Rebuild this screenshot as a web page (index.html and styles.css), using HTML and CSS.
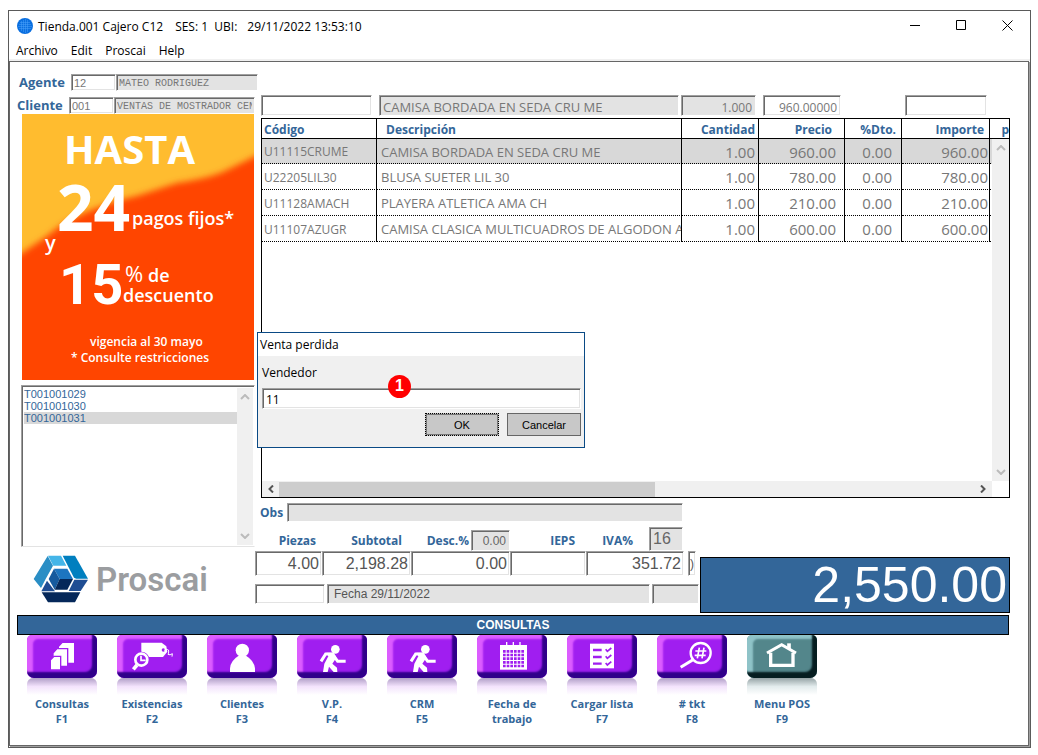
FILE: index.html
```
<!DOCTYPE html>
<html lang="es">
<head>
    <meta charset="UTF-8">
    <meta name="viewport" content="width=device-width, initial-scale=1.0">
    <title>Tienda.001 Cajero C12</title>
    <link rel="stylesheet" href="styles.css">
</head>
<body>
    <div class="window">
        <!-- Title bar -->
        <header class="title-bar">
            <svg class="globe" width="16" height="16" viewBox="0 0 16 16">
                <circle cx="8" cy="8" r="8" fill="#0a6fe0"></circle>
                <path d="M3 4.5h10M2 6.5h12M1 8.5h14M2 10.5h12M4.5 3v10M6.5 2v12M8.5 1v14M10.5 2v12" stroke="#4aa3fa" stroke-width="0.5"></path>
            </svg>
            <span class="title-store">Tienda.001 Cajero C12</span>
            <span class="title-session">SES: 1&nbsp; UBI:</span>
            <span>29/11/2022 13:53:10</span>
            <div class="window-buttons">
                <button aria-label="Minimizar"><svg width="11" height="11"><path d="M0 5.5h10" stroke="#000"></path></svg></button>
                <button aria-label="Maximizar"><svg width="11" height="11"><path d="M.5 .5h9v9h-9z" fill="none" stroke="#000"></path></svg></button>
                <button aria-label="Cerrar"><svg width="11" height="11"><path d="M.5 .5l10 10M10.5 .5l-10 10" stroke="#000"></path></svg></button>
            </div>
        </header>

        <nav class="menu-bar">
            <a href="#">Archivo</a>
            <a href="#">Edit</a>
            <a href="#">Proscai</a>
            <a href="#">Help</a>
        </nav>

        <main>
            <div class="person agent">
                <label for="agent-id">Agente</label>
                <input id="agent-id" class="field person-id" value="12">
                <input class="field off person-name" aria-label="Nombre del agente" value="MATEO RODRIGUEZ" readonly>
            </div>

            <div class="workspace">
                <aside class="sidebar">
                    <div class="person">
                        <label for="client-id">Cliente</label>
                        <input id="client-id" class="field person-id" value="001">
                        <input class="field off person-name" aria-label="Nombre del cliente" value="VENTAS DE MOSTRADOR CENTRO" readonly>
                    </div>

                    <!-- Promo banner -->
                    <svg class="promo" viewBox="0 0 232 266">
                        <defs>
                            <filter id="soft"><feGaussianBlur stdDeviation="3"></feGaussianBlur></filter>
                        </defs>
                        <rect width="232" height="266" fill="#ffbc2f"></rect>
                        <path d="M-20 151L0 139L21 125L38 112Q70 92 115 82L155 69Q190 64 205 56L250 34V290H-20z" fill="#ff4405" filter="url(#soft)"></path>
                        <g fill="#fff" font-weight="600">
                            <text x="42" y="50" font-size="40" font-weight="700">HASTA</text>
                            <text x="35" y="117" font-size="64" font-weight="700">24</text>
                            <text x="110" y="111" font-size="18">pagos fijos*</text>
                            <text x="23" y="136" font-size="20">y</text>
                            <text x="37" y="190" font-size="56" font-weight="700" class="rate">15</text>
                            <text x="103" y="168" font-size="22" font-weight="400">%</text>
                            <text x="126" y="168" font-size="18">de</text>
                            <text x="101" y="188" font-size="18">descuento</text>
                            <text x="68" y="232" font-size="12">vigencia al 30 mayo</text>
                            <text x="49" y="248" font-size="12">* Consulte restricciones</text>
                        </g>
                    </svg>

                    <div class="ticket-box">
                        <ul class="tickets">
                            <li>T001001029</li>
                            <li>T001001030</li>
                            <li class="selected">T001001031</li>
                        </ul>
                        <div class="scroll-v">
                            <svg width="10" height="6"><path d="M1 5l4-4 4 4"></path></svg>
                            <svg width="10" height="6"><path d="M1 1l4 4 4-4"></path></svg>
                        </div>
                    </div>

                    <div class="brand">
                        <svg width="56" height="48" viewBox="0 0 168 144">
                            <path d="M45 2H84L100 32H61z" fill="#44b5e8"></path>
                            <path d="M44 3L60 32L38 72L24 99L2 72z" fill="#2a8ec5"></path>
                            <path d="M89 2H126L165 71H130L123 68z" fill="#007fbf"></path>
                            <path d="M124 74H165L143 108H107z" fill="#1f4d93"></path>
                            <path d="M26 112H142L126 142H45z" fill="#05285a"></path>
                            <path d="M42 77L66 109H25z" fill="#1f4d93"></path>
                            <path d="M63 41H103L120 72H80z" fill="#1d75c0"></path>
                            <path d="M63 41L80 72L65 104L47 72z" fill="#165a9e"></path>
                            <path d="M80 72H120L103 104H65z" fill="#05285a"></path>
                        </svg>
                        <span>Proscai</span>
                    </div>
                </aside>

                <section class="sale">
                    <div class="entry">
                        <input class="field entry-code" aria-label="Código">
                        <input class="field off entry-text" aria-label="Descripción" value="CAMISA BORDADA EN SEDA CRU ME" readonly>
                        <input class="field off number" aria-label="Cantidad" value="1.000" readonly>
                        <input class="field number entry-price" aria-label="Precio" value="960.00000">
                        <input class="field number entry-amount" aria-label="Importe">
                    </div>

                    <div class="items">
                        <table>
                            <colgroup>
                                <col class="col-code">
                                <col>
                                <col class="col-qty">
                                <col class="col-price">
                                <col class="col-disc">
                                <col class="col-amount">
                                <col class="col-more">
                            </colgroup>
                            <thead>
                                <tr>
                                    <th>Código</th>
                                    <th>Descripción</th>
                                    <th>Cantidad</th>
                                    <th>Precio</th>
                                    <th>%Dto.</th>
                                    <th>Importe</th>
                                    <th>p</th>
                                </tr>
                            </thead>
                            <tbody>
                                <tr class="current">
                                    <td>U11115CRUME</td>
                                    <td>CAMISA BORDADA EN SEDA CRU ME</td>
                                    <td>1.00</td>
                                    <td>960.00</td>
                                    <td>0.00</td>
                                    <td>960.00</td>
                                    <td></td>
                                </tr>
                                <tr>
                                    <td>U22205LIL30</td>
                                    <td>BLUSA SUETER LIL 30</td>
                                    <td>1.00</td>
                                    <td>780.00</td>
                                    <td>0.00</td>
                                    <td>780.00</td>
                                    <td></td>
                                </tr>
                                <tr>
                                    <td>U11128AMACH</td>
                                    <td>PLAYERA ATLETICA AMA CH</td>
                                    <td>1.00</td>
                                    <td>210.00</td>
                                    <td>0.00</td>
                                    <td>210.00</td>
                                    <td></td>
                                </tr>
                                <tr>
                                    <td>U11107AZUGR</td>
                                    <td>CAMISA CLASICA MULTICUADROS DE ALGODON AZ</td>
                                    <td>1.00</td>
                                    <td>600.00</td>
                                    <td>0.00</td>
                                    <td>600.00</td>
                                    <td></td>
                                </tr>
                            </tbody>
                        </table>
                        <div class="scroll-v">
                            <svg width="10" height="6"><path d="M1 5l4-4 4 4"></path></svg>
                            <svg width="10" height="6"><path d="M1 1l4 4 4-4"></path></svg>
                        </div>
                        <div class="scroll-h">
                            <svg width="6" height="8"><path d="M5 0.5L1.5 4L5 7.5"></path></svg>
                            <div class="track"><div class="thumb"></div></div>
                            <svg width="6" height="8"><path d="M1 0.5L4.5 4L1 7.5"></path></svg>
                        </div>
                    </div>

                    <div class="notes">
                        <label for="notes">Obs</label>
                        <input id="notes" class="field off" readonly>
                    </div>

                    <div class="summary">
                        <div class="figures">
                            <div class="totals">
                                <label for="pieces" class="head-pieces">Piezas</label>
                                <label for="subtotal" class="head-subtotal">Subtotal</label>
                                <div class="head-field">
                                    <label for="discount">Desc.%</label>
                                    <input class="field off number disc-rate" aria-label="Porcentaje de descuento" value="0.00" readonly>
                                </div>
                                <label for="ieps" class="head-ieps">IEPS</label>
                                <div class="head-field head-tax">
                                    <label for="tax">IVA%</label>
                                    <input class="field off tax-rate" aria-label="Porcentaje de IVA" value="16" readonly>
                                </div>
                                <input id="pieces" class="field total" value="4.00">
                                <input id="subtotal" class="field total" value="2,198.28">
                                <input id="discount" class="field total" value="0.00">
                                <input id="ieps" class="field total">
                                <input id="tax" class="field total" value="351.72">
                                <input class="field extra" aria-label="Otros" value=")">
                            </div>
                            <div class="status">
                                <input class="field" aria-label="Clave">
                                <input class="field off status-date" aria-label="Fecha" value="Fecha 29/11/2022" readonly>
                                <input class="field off" aria-label="Estado" readonly>
                            </div>
                        </div>
                        <output class="grand-total">2,550.00</output>
                    </div>

                    <!-- Lost sale dialog -->
                    <form class="dialog" role="dialog" aria-labelledby="dialog-title">
                        <div id="dialog-title" class="dialog-title">Venta perdida</div>
                        <div class="dialog-body">
                            <label for="seller">Vendedor</label>
                            <input id="seller" class="field" value="11">
                            <div class="dialog-buttons">
                                <button type="button" class="default">OK</button>
                                <button type="button">Cancelar</button>
                            </div>
                        </div>
                        <span class="step">1</span>
                    </form>
                </section>
            </div>

            <h2 class="section-bar">CONSULTAS</h2>

            <!-- Function keys -->
            <div class="keys">
                <button class="key">
                    <span class="cap">
                        <svg viewBox="0 0 210 129">
                            <g fill="#fff" stroke="#a01ef0" stroke-width="4">
                                <path d="M94 35L106 22H143V85H94z"></path>
                                <path d="M78 54L90 41H122V94H78z"></path>
                                <path d="M70 75L81 64H101V105H70z"></path>
                            </g>
                        </svg>
                    </span>
                    Consultas<br>F1
                </button>
                <button class="key">
                    <span class="cap">
                        <svg viewBox="0 0 210 129">
                            <path d="M73 23H134L148 34L151 50L138 66H92L73 50z" fill="#fff"></path>
                            <circle cx="139" cy="45" r="5" fill="#a01ef0"></circle>
                            <path d="M141 46q14-6 14 2t-2 10q6 4 13-2l-1 9" fill="none" stroke="#fff" stroke-width="3"></path>
                            <circle cx="73" cy="74" r="24" fill="#a01ef0"></circle>
                            <circle cx="73" cy="74" r="18" fill="none" stroke="#fff" stroke-width="8"></circle>
                            <path d="M72 62V76H86" fill="none" stroke="#fff" stroke-width="5"></path>
                            <path d="M60 90L49 103" stroke="#fff" stroke-width="11"></path>
                        </svg>
                    </span>
                    Existencias<br>F2
                </button>
                <button class="key">
                    <span class="cap">
                        <svg viewBox="0 0 210 129">
                            <circle cx="106" cy="46" r="20" fill="#fff"></circle>
                            <path d="M69 111V100Q71 76 95 62H117Q141 76 144 100V111z" fill="#fff"></path>
                        </svg>
                    </span>
                    Clientes<br>F3
                </button>
                <button class="key">
                    <span class="cap">
                        <svg viewBox="0 0 210 129">
                            <circle cx="115" cy="43" r="13" fill="#fff"></circle>
                            <path d="M88 53H111L118 68L106 86L120 98L121 111H110L96 95L92 111H78L82 86L94 64z" fill="#fff"></path>
                            <path d="M72 79L86 57H106M110 62L122 79H146" fill="none" stroke="#fff" stroke-width="9"></path>
                        </svg>
                    </span>
                    V.P.<br>F4
                </button>
                <button class="key">
                    <span class="cap">
                        <svg viewBox="0 0 210 129">
                            <circle cx="115" cy="43" r="13" fill="#fff"></circle>
                            <path d="M88 53H111L118 68L106 86L120 98L121 111H110L96 95L92 111H78L82 86L94 64z" fill="#fff"></path>
                            <path d="M72 79L86 57H106M110 62L122 79H146" fill="none" stroke="#fff" stroke-width="9"></path>
                        </svg>
                    </span>
                    CRM<br>F5
                </button>
                <button class="key">
                    <span class="cap">
                        <svg viewBox="0 0 210 129">
                            <path d="M69 30H150V104H69z" fill="#fff"></path>
                            <path d="M89 21V31M109 21V31M129 21V31" stroke="#fff" stroke-width="4"></path>
                            <path d="M78 49H141M78 60H141M78 71H141M78 82H141M78 93H141" stroke="#a01ef0" stroke-width="8" stroke-dasharray="8 3"></path>
                        </svg>
                    </span>
                    Fecha de<br>trabajo
                </button>
                <button class="key">
                    <span class="cap">
                        <svg viewBox="0 0 210 129">
                            <path d="M69 26H141V100H69z" fill="#fff"></path>
                            <path d="M78 45H104M78 66H104M78 86H104" stroke="#a01ef0" stroke-width="7"></path>
                            <path d="M116 43l5 6 12-10M116 64l5 6 12-10M116 84l5 6 12-10" fill="none" stroke="#a01ef0" stroke-width="5"></path>
                        </svg>
                    </span>
                    Cargar lista<br>F7
                </button>
                <button class="key">
                    <span class="cap">
                        <svg viewBox="0 0 210 129">
                            <circle cx="131" cy="54" r="30" fill="none" stroke="#fff" stroke-width="7"></circle>
                            <path d="M127 38L121 70M141 38L135 70M115 48H148M113 61H146" stroke="#fff" stroke-width="5"></path>
                            <path d="M108 74L71 97" stroke="#fff" stroke-width="9"></path>
                        </svg>
                    </span>
                    # tkt<br>F8
                </button>
                <button class="key exit">
                    <span class="cap">
                        <svg viewBox="0 0 210 129">
                            <path d="M71 53V91H138V53" fill="none" stroke="#fff" stroke-width="10"></path>
                            <path d="M60 54L104 29L147 54" fill="none" stroke="#fff" stroke-width="9"></path>
                            <path d="M126 25V42" stroke="#fff" stroke-width="11"></path>
                        </svg>
                    </span>
                    Menu POS<br>F9
                </button>
            </div>
        </main>
    </div>
</body>
</html>
```

FILE: styles.css
```
* {
    box-sizing: border-box;
}

body {
    margin: 0;
    padding: 10px 7px 7px 8px;
    background-color: white;
    font-family: "Open Sans", "Noto Sans", sans-serif;
    font-size: 12px;
    color: black;
}

button {
    padding: 0;
    border: none;
    background: none;
    font-family: inherit;
}

.window {
    display: flex;
    flex-direction: column;
    min-height: calc(100vh - 17px);
    border: 1px solid #5a5a5a;
}

/* Title and menu */
.title-bar {
    display: flex;
    align-items: center;
    height: 30px;
    padding-left: 8px;
}

.globe {
    margin-right: 5px;
}

.title-store {
    margin-right: 12px;
}

.title-session {
    margin-right: 10px;
}

.window-buttons {
    display: flex;
    margin-left: auto;
}

.window-buttons button {
    width: 46px;
    height: 28px;
}

.menu-bar {
    display: flex;
    gap: 13px;
    height: 20px;
    padding-left: 7px;
    line-height: 19px;
    border-bottom: 2px solid #f0f0f0;
}

.menu-bar a {
    color: black;
    text-decoration: none;
}

main {
    flex: 1;
    margin: 0 1px 1px 0;
    padding: 12px 18px 0 7px;
    border: 1px solid #666;
    box-shadow: 1px 1px 0 #a0a0a0;
}

main label {
    color: #369;
    font-weight: bold;
}

/* Sunken fields */
.field {
    min-width: 0;
    width: 100%;
    height: 20px;
    margin: 0;
    padding: 2px 3px 0;
    border: 1px solid;
    border-color: #a0a0a0 #fff #fff #a0a0a0;
    border-radius: 0;
    box-shadow: inset 1px 1px 0 #696969, inset -1px -1px 0 #e3e3e3;
    background-color: white;
    color: #777;
    font-family: inherit;
    font-size: 12px;
}

.off {
    background-color: #e3e3e3;
}

.number {
    text-align: right;
}

.person {
    display: flex;
    align-items: center;
    height: 17px;
}

.person label {
    flex: none;
    width: 52px;
    font-size: 13px;
    line-height: 17px;
}

.person .field {
    height: 17px;
    padding: 1px 2px 0;
    font-family: "Liberation Mono", monospace;
    font-size: 10px;
}

.person .person-id {
    flex: none;
    width: 45px;
    font-family: "Liberation Sans", sans-serif;
    font-size: 11px;
}

.agent {
    width: 241px;
    padding-left: 2px;
}

.workspace {
    display: grid;
    grid-template-columns: 238px 1fr;
    margin-top: 4px;
}

/* Left column */
.sidebar {
    padding-top: 2px;
}

.promo {
    display: block;
    width: 232px;
    height: 266px;
    margin-left: 5px;
}

.rate {
    font-family: Roboto, sans-serif;
}

.ticket-box {
    display: flex;
    height: 162px;
    margin: 5px 0 0 4px;
    padding: 2px 1px 1px 2px;
    border: 1px solid;
    border-color: #a0a0a0 #fff #e3e3e3 #a0a0a0;
    box-shadow: inset 1px 1px 0 #696969;
}

.tickets {
    flex: 1;
    margin: 0;
    padding: 0;
    list-style: none;
    color: #369;
    font-family: "Liberation Sans", sans-serif;
    font-size: 11px;
    line-height: 12px;
}

.tickets .selected {
    background-color: #d8d8d8;
}

.scroll-v {
    display: flex;
    flex-direction: column;
    justify-content: space-between;
    align-items: center;
    width: 16px;
    padding: 6px 0;
    background-color: #f0f0f0;
}

.scroll-v path {
    fill: none;
    stroke: #bbb;
    stroke-width: 2;
}

.brand {
    display: flex;
    align-items: center;
    gap: 7px;
    height: 48px;
    margin: 8px 0 0 16px;
    color: #9b9da0;
    font-family: Roboto, sans-serif;
    font-size: 33px;
    font-weight: 600;
}

/* Sale */
.sale {
    position: relative;
    min-width: 0;
}

.entry {
    display: grid;
    grid-template-columns: 118px 1fr 82px 142px 84px;
    margin: 0 23px 2px 6px;
}

.entry .field {
    height: 21px;
    padding-top: 3px;
}

.entry .entry-code {
    width: 111px;
}

.entry .entry-text {
    font-size: 13px;
}

.entry .number {
    justify-self: start;
    width: 75px;
    margin-left: 2px;
}

.entry .entry-price {
    width: 78px;
}

.entry .entry-amount {
    width: 82px;
}

.items {
    display: grid;
    grid-template-columns: 1fr 17px;
    grid-template-rows: 20px 342px 16px;
    margin-left: 6px;
    border: 1px solid black;
}

.items table {
    grid-area: 1 / 1 / 3 / 3;
    align-self: start;
    width: 100%;
    table-layout: fixed;
    border-collapse: separate;
    border-spacing: 0;
}

.col-code { width: 115px; }
.col-qty { width: 77px; }
.col-price { width: 86px; }
.col-disc { width: 57px; }
.col-amount { width: 88px; }
.col-more { width: 19px; }

th,
td {
    overflow: hidden;
    padding: 2px 3px 0 2px;
    border-right: 1px solid black;
    text-align: right;
    white-space: nowrap;
}

th:last-child,
td:last-child {
    border-right: none;
}

th {
    height: 20px;
    border-bottom: 1px solid black;
    color: #369;
    line-height: 17px;
}

td {
    height: 26px;
    border-bottom: 1px dotted black;
    color: #777;
    font-size: 15px;
    line-height: 23px;
}

.current td {
    height: 25px;
    line-height: 22px;
    background-color: #d8d8d8;
}

th:nth-child(-n+2),
td:nth-child(-n+2) {
    text-align: left;
}

td:first-child {
    font-size: 12px;
}

td:nth-child(2) {
    padding-right: 0;
    padding-left: 4px;
    font-size: 13px;
}

th:nth-child(2) { padding-left: 9px; }
th:nth-child(4) { padding-right: 12px; }
td:nth-child(4) { padding-right: 8px; }
th:nth-child(5) { padding-right: 5px; }
td:nth-child(5) { padding-right: 9px; }
th:nth-child(6) { padding-right: 5px; }
td:nth-child(6) { padding-right: 1px; }
th:last-child { padding-right: 0; }

.items .scroll-v {
    grid-area: 2 / 2;
    z-index: 1;
    width: 17px;
}

.scroll-h {
    grid-area: 3 / 1;
    display: flex;
    align-items: center;
    gap: 5px;
    padding: 0 6px;
    background-color: #f0f0f0;
}

.scroll-h path {
    fill: none;
    stroke: #555;
    stroke-width: 2;
}

.track {
    flex: 1;
}

.thumb {
    width: 54%;
    height: 15px;
    background-color: #cdcdcd;
}

.notes {
    display: flex;
    align-items: center;
    width: 428px;
    margin-top: 5px;
    padding-left: 5px;
}

.notes label {
    flex: none;
    width: 27px;
}

.notes .field {
    height: 19px;
}

.summary {
    display: flex;
    align-items: flex-end;
    gap: 1px;
    margin-top: 5px;
}

.figures {
    flex: none;
    width: 444px;
    padding-bottom: 9px;
}

.totals {
    display: grid;
    grid-template-columns: 67px 89px 99px 76px 98px 12px;
    align-items: end;
}

.totals label {
    line-height: 20px;
    text-align: right;
}

.totals .head-pieces { padding-right: 6px; }
.totals .head-subtotal { padding-right: 9px; }
.totals .head-ieps { padding-right: 11px; }

.head-field {
    display: flex;
    justify-content: flex-end;
    align-items: flex-end;
    gap: 2px;
}

.head-tax {
    grid-column: span 2;
    gap: 16px;
    padding-right: 13px;
}

.head-field .field {
    height: 21px;
    padding-top: 0;
    color: #666;
    font-family: "Liberation Sans", sans-serif;
}

.head-field .disc-rate {
    width: 39px;
}

.head-field .tax-rate {
    width: 34px;
    height: 24px;
    font-size: 16px;
}

.totals .total,
.totals .extra {
    height: 25px;
    padding: 1px 2px 0;
    color: #555;
    font-family: "Liberation Sans", sans-serif;
    font-size: 16px;
    text-align: right;
}

.totals .extra {
    justify-self: end;
    width: 8px;
    padding: 0 1px;
    font-size: 12px;
}

.status {
    display: grid;
    grid-template-columns: 70px 323px 47px;
    gap: 2px;
    margin-top: 8px;
}

.status .status-date {
    padding: 0 6px;
    color: #555;
    font-family: "Liberation Sans", sans-serif;
}

.grand-total {
    flex: 1;
    height: 56px;
    padding-right: 2px;
    border: 1px solid black;
    background-color: #369;
    color: white;
    font-family: "Liberation Sans", sans-serif;
    font-size: 50px;
    line-height: 54px;
    text-align: right;
}

/* Dialog */
.dialog {
    position: absolute;
    top: 237px;
    left: 2px;
    z-index: 2;
    width: 328px;
    border: 1px solid #0a4a85;
    background-color: #f0f0f0;
}

.dialog-title {
    height: 23px;
    padding-left: 2px;
    background-color: white;
    line-height: 24px;
}

.dialog-body {
    padding: 2px 3px 11px 4px;
}

.dialog label {
    display: block;
    color: black;
    font-weight: normal;
    line-height: 30px;
}

.dialog .field {
    display: block;
    height: 21px;
    color: black;
}

.dialog-buttons {
    display: flex;
    justify-content: flex-end;
    gap: 8px;
    margin-top: 4px;
}

.dialog-buttons button {
    width: 74px;
    height: 23px;
    border: 1px solid #666;
    background-color: #c8c8c8;
    font-family: "Liberation Sans", sans-serif;
    font-size: 11px;
}

.dialog-buttons .default {
    border: 1px dotted black;
    box-shadow: inset 0 0 0 1px #777;
}

.step {
    position: absolute;
    top: 42px;
    left: 130px;
    width: 23px;
    height: 23px;
    border-radius: 50%;
    background-color: red;
    color: white;
    font-family: "Liberation Sans", sans-serif;
    font-size: 16px;
    font-weight: bold;
    line-height: 22px;
    text-align: center;
}

/* Function keys */
.section-bar {
    height: 20px;
    margin: 2px 1px 0 0;
    border: 1px solid black;
    background-color: #369;
    color: white;
    font-family: "Liberation Sans", sans-serif;
    font-size: 12px;
    line-height: 18px;
    text-align: center;
}

.keys {
    display: flex;
}

.key {
    width: 90px;
    padding: 0 0 19px;
    color: #369;
    font-size: 11px;
    font-weight: bold;
    line-height: 15px;
}

.cap {
    display: block;
    width: 70px;
    height: 43px;
    margin: 0 auto;
    border-radius: 5px 5px 7px 7px;
    background-color: #a01ef0;
    box-shadow: inset -5px -6px 2px #30008a, inset 6px 4px 2px #dc5cff;
}

.cap svg {
    display: block;
    width: 70px;
    height: 43px;
}

/* Reflection under each key */
.cap::after {
    content: "";
    display: block;
    height: 17px;
    border-radius: 6px 6px 0 0;
    background: linear-gradient(rgba(80, 40, 130, 0.45), rgba(190, 100, 240, 0.18) 50%, rgba(220, 150, 255, 0));
}

.key .cap {
    margin-bottom: 18px;
}

.exit .cap {
    background-color: #53868b;
    box-shadow: inset -5px -6px 2px #061d20, inset 6px 4px 2px #8fc3c8;
}

.exit .cap::after {
    background: linear-gradient(rgba(20, 50, 55, 0.45), rgba(100, 150, 155, 0.18) 50%, rgba(150, 200, 205, 0));
}
```
